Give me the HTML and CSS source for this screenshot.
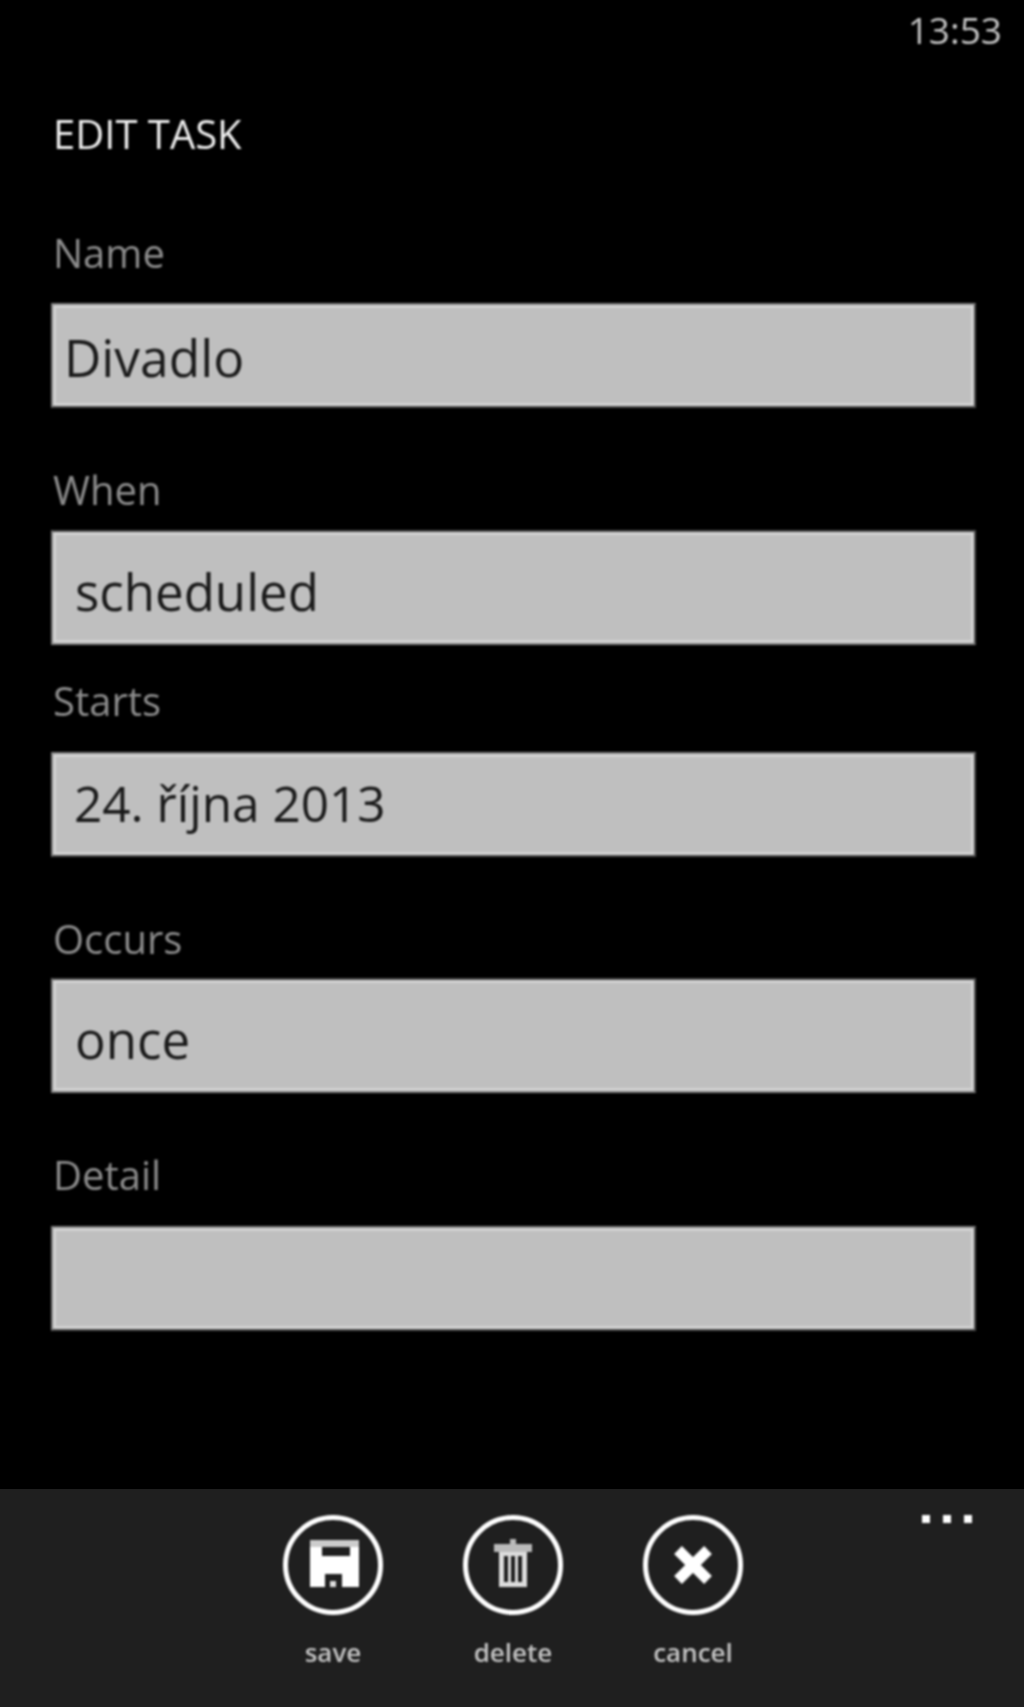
FILE: index.html
```html
<!DOCTYPE html>
<html lang="en">
<head>
    <meta charset="UTF-8">
    <meta name="viewport" content="width=device-width, initial-scale=1.0">
    <title>Edit Task</title>
    <link rel="stylesheet" href="styles.css">
</head>
<body>
    <div class="page">
        <div class="status">13:53</div>
        <h1>EDIT TASK</h1>
        <form class="form">
            <div class="row row-name">
                <label for="name">Name</label>
                <input type="text" id="name" class="name-input" value="Divadlo">
            </div>
            <div class="row row-when">
                <label for="when">When</label>
                <input type="text" id="when" class="tall" value="scheduled">
            </div>
            <div class="row row-starts">
                <label for="starts">Starts</label>
                <input type="text" id="starts" class="date-input" value="24. října 2013">
            </div>
            <div class="row row-occurs">
                <label for="occurs">Occurs</label>
                <input type="text" id="occurs" class="tall" value="once">
            </div>
            <div class="row row-detail">
                <label for="detail">Detail</label>
                <input type="text" id="detail">
            </div>
        </form>

        <div class="appbar">
            <div class="actions">
                <button type="button" class="action">
                    <svg class="icon" viewBox="0 0 100 100">
                        <circle cx="50" cy="50" r="47.5" fill="none" stroke="#fff" stroke-width="5"/>
                        <path fill="#fff" fill-rule="evenodd" d="M27 25H76V72H27ZM39 32V41H67V32ZM42 59V72H59V59Z"/>
                        <rect x="27" y="25" width="49" height="7" fill="#ccc"/>
                        <rect x="47" y="66" width="6" height="6" fill="#ddd"/>
                    </svg>
                    <span>save</span>
                </button>
                <button type="button" class="action">
                    <svg class="icon" viewBox="0 0 100 100">
                        <circle cx="50" cy="50" r="47.5" fill="none" stroke="#fff" stroke-width="5"/>
                        <path fill="#bbb" d="M47 24H53V29H69V37H31V29H47Z"/>
                        <path fill="#ddd" fill-rule="evenodd" d="M36 37H64V72H36ZM41 41V67H45V41ZM48 41V67H52V41ZM55 41V67H59V41Z"/>
                    </svg>
                    <span>delete</span>
                </button>
                <button type="button" class="action">
                    <svg class="icon" viewBox="0 0 100 100">
                        <circle cx="50" cy="50" r="47.5" fill="none" stroke="#fff" stroke-width="5"/>
                        <path d="M35 35L65 65M65 35L35 65" stroke="#fff" stroke-width="11" fill="none"/>
                    </svg>
                    <span>cancel</span>
                </button>
            </div>
            <div class="more">
                <i></i><i></i><i></i>
            </div>
        </div>
    </div>
</body>
</html>
```

FILE: styles.css
```css
html, body {
    margin: 0;
    padding: 0;
    background-color: #000;
}
body {
    font-family: "Open Sans", "Noto Sans", sans-serif;
    color: #bfbfbf;
}
.page {
    position: relative;
    height: 1707px;
    display: flex;
    flex-direction: column;
    overflow: hidden;
}
/* the phone shot is soft, so soften everything but the bar background */
.status, h1, .form, .actions, .more {
    filter: blur(0.9px);
}
.status {
    height: 60px;
    padding: 6px 22px 0 0;
    box-sizing: border-box;
    text-align: right;
    font-size: 37px;
    font-weight: 500;
    line-height: 48px;
    color: #c4c4c4;
}
h1 {
    margin: 49px 0 0 53px;
    font-size: 40px;
    line-height: 50px;
    font-weight: 500;
    color: #eee;
}
.form {
    padding: 0 48px 0 51px;
}
label {
    display: block;
    font-size: 40px;
    font-weight: 500;
    line-height: 50px;
    color: #8c8c8c;
    padding-left: 2px;
}
input[type="text"] {
    display: block;
    width: 100%;
    height: 105px;
    padding: 6px 0 0 22px;
    box-sizing: border-box;
    background-color: #bfbfbf;
    border: 2px solid #808080;
    border-bottom-color: #4a4a4a;
    border-right-color: #4a4a4a;
    box-shadow: inset 0 0 0 3px #d2d2d2;
    border-radius: 0;
    outline: none;
    font-family: inherit;
    font-size: 51px;
    font-weight: 500;
    color: #1a1a1a;
}
input.tall {
    height: 115px;
    border-top-color: #4a4a4a;
    border-bottom-color: #808080;
}
input.name-input {
    padding: 2px 0 0 11px;
    font-size: 51.5px;
}
input.date-input {
    padding: 0 0 4px 21px;
    font-size: 49.5px;
}
.row-name {
    margin-top: 69px;
}
.row-name label {
    margin-bottom: 25px;
}
.row-when {
    margin-top: 57px;
}
.row-when label {
    margin-bottom: 15px;
}
.row-starts {
    margin-top: 31px;
}
.row-starts label {
    margin-bottom: 26px;
}
.row-occurs {
    margin-top: 57px;
}
.row-occurs label {
    margin-bottom: 14px;
}
.row-detail {
    margin-top: 57px;
}
.row-detail label {
    margin-bottom: 26px;
}
.appbar {
    margin-top: auto;
    height: 218px;
    background-color: #1f1f1f;
    position: relative;
}
.actions {
    display: flex;
    justify-content: center;
    gap: 80px;
    padding: 26px 0 0 2px;
}
.action {
    width: 100px;
    padding: 0;
    background: none;
    border: none;
    font-family: inherit;
    font-size: 26px;
    font-weight: 600;
    line-height: 30px;
    color: #c4c4c4;
    display: flex;
    flex-direction: column;
    align-items: center;
    white-space: nowrap;
}
.action span {
    margin-top: 22px;
}
.icon {
    display: block;
    width: 100px;
    height: 100px;
}
.more {
    position: absolute;
    top: 26px;
    right: 52px;
    display: flex;
    gap: 13px;
}
.more i {
    display: block;
    width: 8px;
    height: 8px;
    background-color: #fff;
}
```
